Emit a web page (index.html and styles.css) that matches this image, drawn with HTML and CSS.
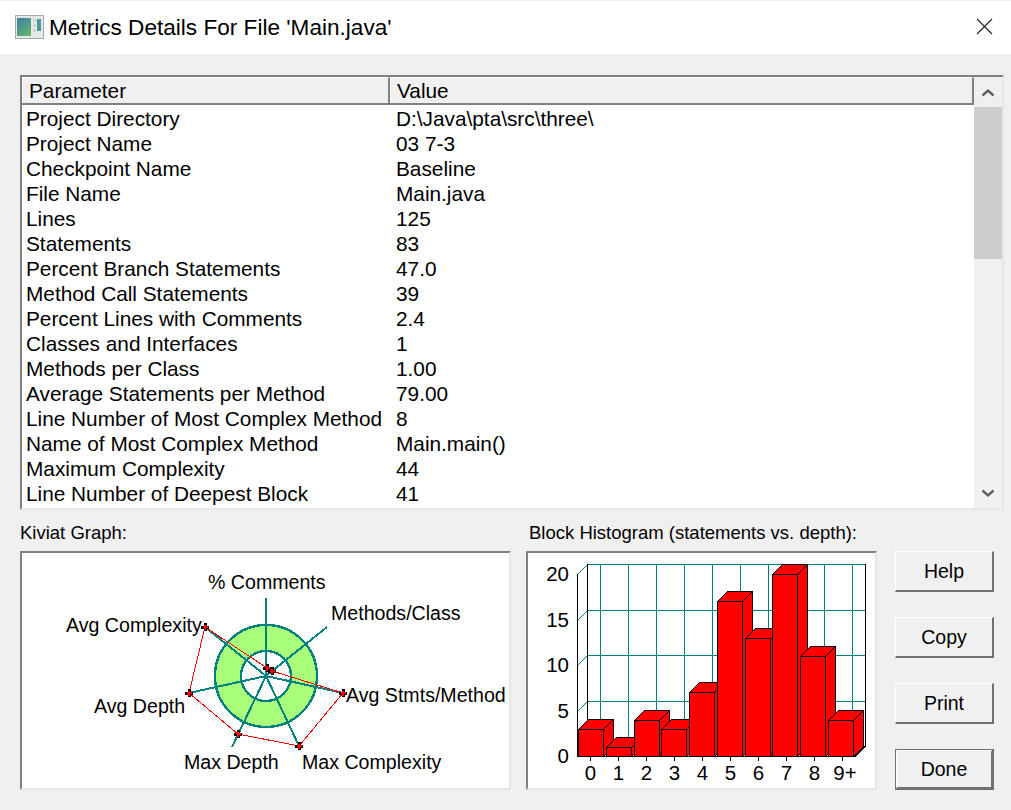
FILE: index.html
```html
<!DOCTYPE html>
<html lang="en">
<head>
<meta charset="utf-8">
<title>Metrics Details For File 'Main.java'</title>
<link rel="stylesheet" href="styles.css">
</head>
<body>
<div class="window">
  <header class="titlebar">
    <svg class="app-icon" width="29" height="24" viewBox="0 0 29 24">
      <defs><linearGradient id="ig" x1="0" y1="0" x2="0.6" y2="1"><stop offset="0" stop-color="#3d7fa8"/><stop offset="1" stop-color="#62b070"/></linearGradient></defs>
      <rect x="0.5" y="0.5" width="28" height="23" fill="#e4e8e6" stroke="#a9a9a9"/>
      <rect x="2" y="3" width="14" height="18" fill="url(#ig)"/>
      <rect x="18" y="4" width="3" height="3" fill="#cfd6d2"/><rect x="18" y="9" width="3" height="3" fill="#cfd6d2"/><rect x="18" y="14" width="3" height="3" fill="#cfd6d2"/>
      <rect x="22" y="4" width="4" height="12" fill="#4d9a9a"/>
    </svg>
    <h1 class="title">Metrics Details For File 'Main.java'</h1>
    <svg class="close" width="17" height="17" viewBox="0 0 17 17"><path d="M1 1L16 16M16 1L1 16" stroke="#222" stroke-width="1.1" fill="none"/></svg>
  </header>
  <main class="content">
    <section class="list">
      <div class="list-main">
        <div class="list-head"><div class="hcell hparam">Parameter</div><div class="hcell hvalue">Value</div></div>
        <div class="rows">
          <div class="row"><span class="p">Project Directory</span><span class="v">D:\Java\pta\src\three\</span></div>
          <div class="row"><span class="p">Project Name</span><span class="v">03 7-3</span></div>
          <div class="row"><span class="p">Checkpoint Name</span><span class="v">Baseline</span></div>
          <div class="row"><span class="p">File Name</span><span class="v">Main.java</span></div>
          <div class="row"><span class="p">Lines</span><span class="v">125</span></div>
          <div class="row"><span class="p">Statements</span><span class="v">83</span></div>
          <div class="row"><span class="p">Percent Branch Statements</span><span class="v">47.0</span></div>
          <div class="row"><span class="p">Method Call Statements</span><span class="v">39</span></div>
          <div class="row"><span class="p">Percent Lines with Comments</span><span class="v">2.4</span></div>
          <div class="row"><span class="p">Classes and Interfaces</span><span class="v">1</span></div>
          <div class="row"><span class="p">Methods per Class</span><span class="v">1.00</span></div>
          <div class="row"><span class="p">Average Statements per Method</span><span class="v">79.00</span></div>
          <div class="row"><span class="p">Line Number of Most Complex Method</span><span class="v">8</span></div>
          <div class="row"><span class="p">Name of Most Complex Method</span><span class="v">Main.main()</span></div>
          <div class="row"><span class="p">Maximum Complexity</span><span class="v">44</span></div>
          <div class="row"><span class="p">Line Number of Deepest Block</span><span class="v">41</span></div>
        </div>
      </div>
      <div class="scrollbar">
        <div class="sb-btn"><svg width="14" height="9" viewBox="0 0 14 9"><path d="M1.5 7.5L7 2.5L12.5 7.5" fill="none" stroke="#606060" stroke-width="2.4"/></svg></div>
        <div class="sb-thumb"></div>
        <div class="sb-track"></div>
        <div class="sb-btn sb-down"><svg width="14" height="9" viewBox="0 0 14 9"><path d="M1.5 1.5L7 6.5L12.5 1.5" fill="none" stroke="#606060" stroke-width="2.4"/></svg></div>
      </div>
    </section>
    <section class="bottom">
      <div class="graph graph-k">
        <div class="caption">Kiviat Graph:</div>
        <div class="panel">
          <svg class="chart" width="487" height="235" viewBox="22 553 487 235" shape-rendering="crispEdges">
            <circle cx="266" cy="676" r="51" fill="#a9ff7a" stroke="#008080" stroke-width="2.400"/>
            <circle cx="266" cy="676" r="25" fill="#fff" stroke="#008080" stroke-width="2.400"/>
            <g stroke="#008080" stroke-width="2" fill="none">
              <path d="M266 676V598M266 676L327 627M266 676L343 693M266 676L299 746M266 676L232 747M266 676L189 693M266 676L205 627"/>
            </g>
            <polygon points="267,668 272,671 343,693 299,746 238,734 189,693 205,627" fill="none" stroke="#f00" stroke-width="1"/>
            <g class="marks">
              <path d="M267 664v8M263 668h8M272 667v8M268 671h8M343 689v8M339 693h8M299 742v8M295 746h8M238 730v8M234 734h8M189 689v8M185 693h8M205 623v8M201 627h8" stroke="#000" stroke-width="3" fill="none"/>
              <path d="M267 665.500v5M264.500 668h5M272 668.500v5M269.500 671h5M343 690.500v5M340.500 693h5M299 743.500v5M296.500 746h5M238 731.500v5M235.500 734h5M189 690.500v5M186.500 693h5M205 624.500v5M202.500 627h5" stroke="#f00" stroke-width="2" fill="none"/>
            </g>
            <g class="clabel">
              <text x="208" y="589">% Comments</text>
              <text x="331" y="620">Methods/Class</text>
              <text x="66" y="632">Avg Complexity</text>
              <text x="346" y="702">Avg Stmts/Method</text>
              <text x="94" y="713">Avg Depth</text>
              <text x="184" y="769">Max Depth</text>
              <text x="302" y="769">Max Complexity</text>
            </g>
          </svg>
        </div>
      </div>
      <div class="graph graph-h">
        <div class="caption">Block Histogram (statements vs. depth):</div>
        <div class="panel">
          <svg class="chart" width="347" height="235" viewBox="528 553 347 235" shape-rendering="crispEdges">
            <g stroke="#008080" stroke-width="1" fill="none">
              <path d="M588 564.500H865M588 610.500H865M588 655.500H865M588 701.500H865"/>
              <path d="M600.500 564V746M628.500 564V746M656.500 564V746M684.500 564V746M712.500 564V746M740.500 564V746M768.500 564V746M796.500 564V746M824.500 564V746M852.500 564V746"/>
            </g>
            <g stroke="#008080" stroke-width="1" fill="none">
              <path d="M577.500 574.500L587.500 564.500M577.500 620.500L587.500 610.500M577.500 665.500L587.500 655.500M577.500 711.500L587.500 701.500"/>
            </g>
            <g stroke="#000" fill="none" stroke-width="1">
              <path d="M577.500 574V756.500H855M587.500 564V746M865.500 564V746"/>
              <path d="M590.500 756V761M618.500 756V761M646.500 756V761M674.500 756V761M702.500 756V761M730.500 756V761M758.500 756V761M786.500 756V761M814.500 756V761M842.500 756V761"/>
            </g>
            <path d="M855 756.500L865.500 746" stroke="#000" fill="none"/>
            <g class="bars" fill="#f00" stroke="#000" stroke-width="1" stroke-linejoin="round">
              <path d="M578.500 729.500l10-10h25l-10 10zM603.500 729.500l10-10v27l-10 10z"/><rect x="578.500" y="729.500" width="25" height="27"/>
              <path d="M606.500 747.500l10-10h25l-10 10zM631.500 747.500l10-10v9l-10 10z"/><rect x="606.500" y="747.500" width="25" height="9"/>
              <path d="M634.500 720.500l10-10h25l-10 10zM659.500 720.500l10-10v36l-10 10z"/><rect x="634.500" y="720.500" width="25" height="36"/>
              <path d="M661.500 729.500l10-10h25l-10 10zM686.500 729.500l10-10v27l-10 10z"/><rect x="661.500" y="729.500" width="25" height="27"/>
              <path d="M689.500 692.500l10-10h25l-10 10zM714.500 692.500l10-10v64l-10 10z"/><rect x="689.500" y="692.500" width="25" height="64"/>
              <path d="M717.500 601.500l10-10h25l-10 10zM742.500 601.500l10-10v155l-10 10z"/><rect x="717.500" y="601.500" width="25" height="155"/>
              <path d="M745.500 638.500l10-10h25l-10 10zM770.500 638.500l10-10v118l-10 10z"/><rect x="745.500" y="638.500" width="25" height="118"/>
              <path d="M772.500 574.500l10-10h25l-10 10zM797.500 574.500l10-10v182l-10 10z"/><rect x="772.500" y="574.500" width="25" height="182"/>
              <path d="M800.500 656.500l10-10h25l-10 10zM825.500 656.500l10-10v100l-10 10z"/><rect x="800.500" y="656.500" width="25" height="100"/>
              <path d="M828.500 720.500l10-10h25l-10 10zM853.500 720.500l10-10v36l-10 10z"/><rect x="828.500" y="720.500" width="25" height="36"/>
            </g>
            <g class="hlabel" text-anchor="end">
              <text x="569" y="581">20</text>
              <text x="569" y="627">15</text>
              <text x="569" y="672">10</text>
              <text x="569" y="718">5</text>
              <text x="569" y="763">0</text>
            </g>
            <g class="hlabel" text-anchor="middle">
              <text x="590.500" y="780">0</text>
              <text x="618.500" y="780">1</text>
              <text x="646.500" y="780">2</text>
              <text x="674.500" y="780">3</text>
              <text x="702.500" y="780">4</text>
              <text x="730.500" y="780">5</text>
              <text x="758.500" y="780">6</text>
              <text x="786.500" y="780">7</text>
              <text x="814.500" y="780">8</text>
              <text x="845" y="780">9+</text>
            </g>
          </svg>
        </div>
      </div>
      <div class="buttons">
        <button class="btn">Help</button>
        <button class="btn">Copy</button>
        <button class="btn">Print</button>
        <button class="btn btn-default"><span class="btn-inner">Done</span></button>
      </div>
    </section>
  </main>
</div>
</body>
</html>
```
FILE: styles.css
```css
* { box-sizing: border-box; }
html, body { margin: 0; padding: 0; }
body {
  width: 1011px;
  height: 810px;
  overflow: hidden;
  background: #f0f0f0;
  font-family: "Liberation Sans", Arial, sans-serif;
  color: #000;
}
.window { width: 1011px; height: 810px; display: flex; flex-direction: column; }
.titlebar {
  height: 54px;
  flex: none;
  background: #fff;
  border-top: 1px solid #f0f0f0;
  display: flex;
  align-items: center;
  padding-left: 15px;
}
.app-icon { flex: none; margin-top: -1px; }
.title { margin: 0 0 0 5px; font-size: 22.6px; font-weight: 400; line-height: 24px; white-space: nowrap; }
.close { margin-left: auto; margin-right: 18px; margin-top: -2px; flex: none; }

.content { flex: 1; padding: 21px 0 0 20px; display: flex; flex-direction: column; }

.list {
  width: 984px;
  height: 435px;
  display: flex;
  background: #fff;
  border-style: solid;
  border-width: 2px;
  border-color: #808080 #e6e6e6 #e6e6e6 #808080;
}
.list-main { width: 952px; flex: none; display: flex; flex-direction: column; overflow: hidden; }
.list-head { height: 28px; flex: none; display: flex; background: #f0f0f0; border-bottom: 2px solid #808080; }
.hcell {
  font-size: 20.8px;
  line-height: 26px;
  padding-left: 6px;
  border-top: 1px solid #fff;
  border-left: 1px solid #fff;
  border-right: 2px solid #808080;
}
.hparam { width: 368px; }
.hvalue { width: 584px; }
.rows { flex: 1; display: flex; flex-direction: column; overflow: hidden; padding-top: 1px; }
.row { height: 25px; flex: none; display: flex; align-items: center; font-size: 20.8px; line-height: 25px; white-space: nowrap; }
.p { width: 370px; flex: none; padding-left: 4px; }
.v { flex: none; padding-left: 4px; }

.scrollbar { flex: 1; display: flex; flex-direction: column; background: #f0f0f0; }
.sb-btn { height: 30px; flex: none; display: flex; align-items: center; justify-content: center; }
.sb-thumb { height: 152px; flex: none; background: #cdcdcd; }
.sb-track { flex: 1; }

.bottom { display: flex; margin-top: 8px; }
.graph { display: flex; flex-direction: column; flex: none; }
.graph-k { width: 491px; margin-right: 15px; }
.graph-h { width: 351px; padding-left: 0; }
.caption { height: 33px; font-size: 18.5px; line-height: 30px; white-space: nowrap; padding-left: 0; }
.graph-h .caption { padding-left: 3px; }
.panel {
  height: 239px;
  background: #fff;
  border-style: solid;
  border-width: 2px;
  border-color: #808080 #e6e6e6 #e6e6e6 #808080;
  overflow: hidden;
}
.chart { display: block; }
.clabel text { font-size: 19.6px; fill: #000; }
.hlabel text { font-size: 20.5px; fill: #000; }

.buttons { display: flex; flex-direction: column; gap: 25px; margin-left: 18px; padding-top: 33px; }
.btn {
  width: 99px;
  height: 41px;
  background: #f0f0f0;
  font-family: inherit;
  font-size: 19.5px;
  color: #000;
  padding: 0 0 0 0;
  border-style: solid;
  border-width: 1px 2px 2px 1px;
  border-color: #fff #707070 #707070 #fff;
  outline: none;
}
.btn-default {
  border-width: 1px 2px 2px 1px;
  border-color: #707070;
  box-shadow: inset 1px 1px 0 #fff, inset -1px -1px 0 #707070;
}
```
